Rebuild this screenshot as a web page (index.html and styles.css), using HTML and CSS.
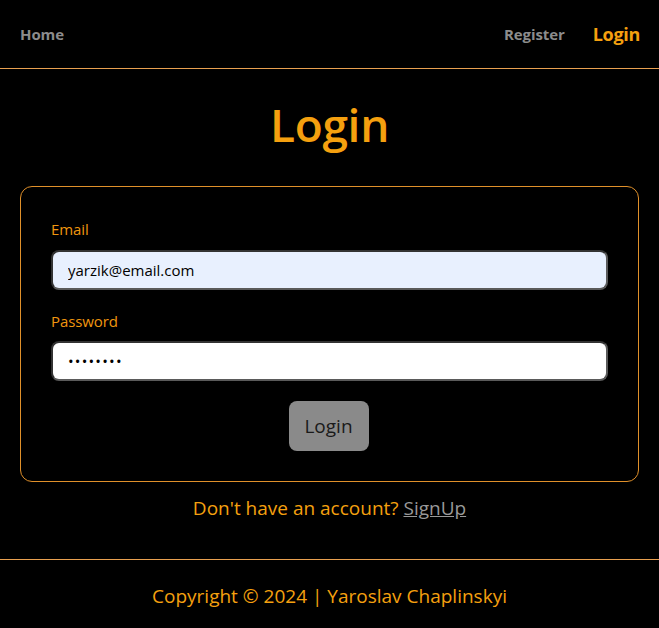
FILE: index.html
```html
<!DOCTYPE html>
<html>
<head>
<meta charset="utf-8">
<link rel="stylesheet" href="styles.css">
</head>
<body>
<header class="nav">
  <a class="nav-link" href="#">Home</a>
  <div class="nav-right">
    <a class="nav-link" href="#">Register</a>
    <a class="nav-link active" href="#">Login</a>
  </div>
</header>
<main class="main">
  <h1 class="title">Login</h1>
  <form class="card">
    <label class="label">Email</label>
    <input class="input email" type="text" value="yarzik@email.com">
    <label class="label">Password</label>
    <input class="input password" type="password" value="password">
    <div class="btn-row"><button class="btn" type="button">Login</button></div>
  </form>
  <p class="signup">Don't have an account? <a href="#">SignUp</a></p>
</main>
<footer class="footer">Copyright © 2024 | Yaroslav Chaplinskyi</footer>
</body>
</html>
```
FILE: styles.css
```css
* { box-sizing: border-box; }
html, body { margin: 0; padding: 0; background: #000; }
body {
  font-family: "Open Sans", "Noto Sans", sans-serif;
  color: #f5a00f;
  width: 659px;
  height: 628px;
  overflow: hidden;
}
.nav {
  height: 69px;
  border-bottom: 1px solid #e8a050;
  display: flex;
  align-items: center;
  justify-content: space-between;
  padding: 0 19px 0 20px;
}
.nav-right { display: flex; align-items: center; gap: 28px; }
.nav-link {
  color: #8c8c8c;
  font-weight: 700;
  font-size: 15px;
  text-decoration: none;
  letter-spacing: -0.1px;
}
.nav-link.active { color: #f5a00f; font-size: 18px; letter-spacing: -0.3px; }
.main { padding: 0 20px; }
.title {
  margin: 0;
  padding-top: 25px;
  height: 117px;
  text-align: center;
  font-size: 46px;
  font-weight: 600;
  line-height: 60px;
  color: #f5a00f;
  letter-spacing: -0.3px;
}
.card {
  border: 1px solid #e0902a;
  border-radius: 12px;
  padding: 30px 30px 30px 30px;
  display: flex;
  flex-direction: column;
  height: 296px;
}
.label {
  font-size: 15px;
  line-height: 24px;
  color: #f0960f;
  height: 33px;
  letter-spacing: -0.1px;
}
.input {
  height: 40px;
  border-radius: 8px;
  border: 2px solid #5a5a5a;
  border-top-color: #333;
  border-left-color: #333;
  background: #fff;
  font-family: "Open Sans", sans-serif;
  font-size: 15px;
  padding: 0 15px;
  color: #000;
  margin-bottom: 20px;
  outline: none;
  width: 100%;
}
.input.email { background: #e8f0fe; margin-bottom: 19px; }
.input.password { letter-spacing: 1.2px; }
.btn-row { display: flex; justify-content: center; }
.btn {
  width: 80px;
  height: 50px;
  background: #8a8a8a;
  border: none;
  border-radius: 8px;
  font-family: "Open Sans", sans-serif;
  font-size: 19px;
  color: #1a1a1a;
  margin-left: -2px;
}
.signup {
  margin: 0;
  text-align: center;
  font-size: 19px;
  line-height: 52px;
  height: 77px;
}
.signup a { color: #999; text-decoration: underline; }
.footer {
  border-top: 1px solid #e8a050;
  height: 69px;
  display: flex;
  align-items: center;
  justify-content: center;
  font-size: 19px;
  padding-top: 4px;
}
```
